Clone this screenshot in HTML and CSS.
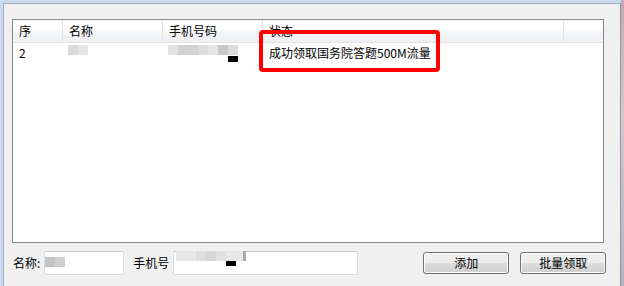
FILE: index.html
```html
<!DOCTYPE html>
<html>
<head>
<meta charset="utf-8">
<link rel="stylesheet" href="styles.css">
</head>
<body>
<div class="frame">
  <div class="inner">
    <div class="listbox">
      <div class="header">
        <div class="col c1">序</div>
        <div class="col c2">名称</div>
        <div class="col c3">手机号码</div>
        <div class="col c4">状态</div>
        <div class="col c5"></div>
      </div>
      <div class="row">
        <div class="cell c1">2</div>
        <div class="cell c2"><span class="blur-name"><i class="m1"></i><i class="m2"></i></span></div>
        <div class="cell c3">
          <span class="blur-phone"><i class="p1"></i><i class="p2"></i><i class="p3"></i><i class="p4"></i><i class="p5"></i><i class="p6"></i></span>
          <span class="black-mark"></span>
        </div>
        <div class="cell c4">成功领取国务院答题500M流量</div>
      </div>
    </div>
    <div class="controls">
      <span class="label">名称:</span>
      <div class="input name-input"><span class="blur-small"><i class="m1"></i><i class="m2"></i></span></div>
      <span class="label phone-label">手机号</span>
      <div class="input phone-input">
        <span class="blur-phone2"><i class="p1"></i><i class="p2"></i><i class="p3"></i><i class="p4"></i><i class="p5"></i><i class="p6"></i></span>
        <span class="black-mark2"></span>
      </div>
      <button class="btn add">添加</button>
      <button class="btn batch">批量领取</button>
    </div>
  </div>
</div>
<div class="highlight"></div>
</body>
</html>
```
FILE: styles.css
```css
html, body {
  margin: 0;
  padding: 0;
}
body {
  width: 624px;
  height: 286px;
  overflow: hidden;
  position: relative;
  background: linear-gradient(180deg, #c9a6b3 0%, #d9c7cf 40%, #b8b0c6 100%);
  font-family: "Noto Sans CJK SC", "Noto Sans", sans-serif;
  font-size: 12px;
  color: #000;
}
.frame {
  width: 618px;
  height: 283px;
  padding: 3px 0 0 3px;
  background: #c7daf0;
}
.inner {
  box-sizing: border-box;
  width: 618px;
  height: 283px;
  background: #f0f0f0;
  border-top: 1px solid #a3acb8;
  border-left: 1px solid #a3acb8;
  border-right: 1px solid #8d96a3;
  padding: 15px 0 0 8px;
}
.listbox {
  box-sizing: border-box;
  width: 592px;
  height: 224px;
  border: 1px solid #828790;
  background: #fff;
}
.header {
  display: flex;
  height: 22px;
  background: linear-gradient(180deg, #ffffff 0%, #ffffff 40%, #f3f4f6 60%, #eef0f3 100%);
  border-bottom: 1px solid #e3e4e6;
}
.col {
  box-sizing: border-box;
  height: 22px;
  line-height: 22px;
  padding-left: 6px;
  border-right: 1px solid #e3e4e6;
  white-space: nowrap;
}
.c1 { width: 50px; }
.c2 { width: 100px; }
.c3 { width: 100px; }
.c4 { width: 301px; }
.c5 { flex: 1; border-right: none; }
.row {
  display: flex;
  height: 17px;
  margin-top: 1px;
}
.cell {
  box-sizing: border-box;
  height: 17px;
  line-height: 17px;
  padding-left: 6px;
  white-space: nowrap;
  position: relative;
}
.cell.c1 { padding-left: 6px; }
.blur-name, .blur-small, .blur-phone, .blur-phone2 {
  display: flex;
  height: 10px;
}
.blur-name {
  margin-top: 1px;
  margin-left: -1px;
}
i { display: block; height: 100%; }
.blur-name .m1, .blur-small .m1 { width: 10px; background: #dadada; }
.blur-name .m2, .blur-small .m2 { width: 10px; background: #e6e6e6; }
.blur-small .m1 { background: #c4c4c4; }
.blur-small .m2 { background: #cfcfcf; }
.blur-phone {
  margin-top: 1px;
  margin-left: -1px;
}
.blur-phone .p1 { width: 10px; background: #e2e2e2; }
.blur-phone .p2 { width: 20px; background: #d2d2d2; }
.blur-phone .p3 { width: 10px; background: #dcdcdc; }
.blur-phone .p4 { width: 10px; background: #e4e4e4; }
.blur-phone .p5 { width: 10px; background: #c9c9c9; }
.blur-phone .p6 { width: 10px; background: #dcdcdc; }
.black-mark {
  position: absolute;
  left: 65px;
  top: 12px;
  width: 10px;
  height: 6px;
  background: #000;
}
.controls {
  display: flex;
  align-items: center;
  margin-top: 8px;
  height: 24px;
  margin-left: 1px;
}
.label {
  white-space: nowrap;
  line-height: 24px;
}
.input {
  box-sizing: border-box;
  height: 24px;
  background: #fff;
  border: 1px solid #d6d9de;
  border-top-color: #c9ccd1;
  border-radius: 2px;
  position: relative;
}
.name-input {
  width: 80px;
  margin-left: 4px;
  padding: 5px 0 0 0;
}
.phone-label { margin-left: 9px; }
.phone-input {
  width: 185px;
  margin-left: 4px;
}
.blur-phone2 {
  position: absolute;
  left: 2px;
  top: -1px;
}
.blur-phone2 .p1 { width: 20px; background: #e6e6e6; }
.blur-phone2 .p2 { width: 10px; background: #dddddd; }
.blur-phone2 .p3 { width: 10px; background: #d6d6d6; }
.blur-phone2 .p4 { width: 10px; background: #e0e0e0; }
.blur-phone2 .p5 { width: 17px; background: #e8e8e8; }
.blur-phone2 .p6 { width: 3px; background: #a8a8ae; }
.black-mark2 {
  position: absolute;
  left: 52px;
  top: 9px;
  width: 10px;
  height: 5px;
  background: #000;
}
.btn {
  box-sizing: border-box;
  width: 86px;
  height: 22px;
  border: 1px solid #707070;
  border-radius: 3px;
  background: linear-gradient(180deg, #f2f2f2 0%, #ebebeb 48%, #dddddd 52%, #cfcfcf 100%);
  font-family: "Noto Sans CJK SC", "Noto Sans", sans-serif;
  font-size: 12px;
  color: #000;
  padding: 0;
  line-height: 20px;
  box-shadow: inset 0 0 0 1px #fcfcfc;
}
.add { margin-left: 65px; }
.batch { margin-left: 11px; }
.highlight {
  position: absolute;
  left: 259px;
  top: 30px;
  width: 173px;
  height: 34px;
  border: 4px solid #ff0000;
  border-radius: 4px;
}
```
